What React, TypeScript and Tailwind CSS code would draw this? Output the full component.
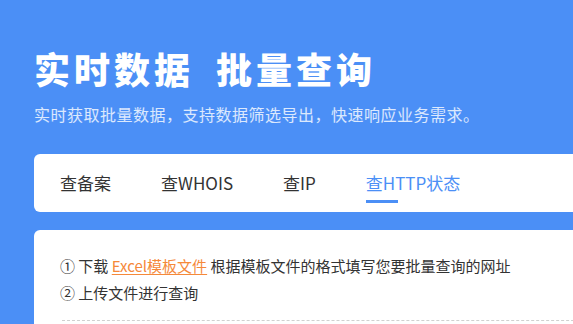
import React from "react";

const tabs = ["查备案", "查WHOIS", "查IP", "查HTTP状态"];

export default function App() {
  const active = 3;
  return (
    <div
      className="h-[324px] w-full overflow-hidden bg-[#4b8ff6] pl-[34px]"
      style={{ fontFamily: '"Noto Sans CJK SC", "Noto Sans", sans-serif' }}
    >
      <h1 className="mt-[50px] flex gap-[22px] text-[36px] font-black leading-[36px] tracking-[4px] text-white">
        <span>实时数据</span>
        <span>批量查询</span>
      </h1>
      <p className="mt-[20px] text-[16px] leading-[16px] tracking-[0.5px] text-white/80">
        实时获取批量数据，支持数据筛选导出，快速响应业务需求。
      </p>

      <div className="mt-[32px] flex h-[58px] w-[600px] items-center gap-[50px] rounded-l-md bg-white pl-[26px]">
        {tabs.map((t, i) => (
          <div key={t} className="relative">
            <span
              className={
                "text-[17px] leading-[20px] " +
                (i === active ? "text-[#4b8ff6]" : "text-[#333333]")
              }
            >
              {t}
            </span>
            {i === active && (
              <div className="absolute left-0 top-[29px] h-[3px] w-[32px] bg-[#4b8ff6]" />
            )}
          </div>
        ))}
      </div>

      <div className="mt-[18px] w-[600px] rounded-l-md bg-white pl-[26px] pt-[22px] text-[15px] leading-[27px] text-[#333333]">
        <p>
          ① 下载{" "}
          <a className="text-[#f5893a] underline underline-offset-2">Excel模板文件</a>{" "}
          根据模板文件的格式填写您要批量查询的网址
        </p>
        <p>② 上传文件进行查询</p>
        <div className="ml-[2px] mt-[14px] h-[40px] border-t border-dashed border-[#d0d0d0]" />
      </div>
    </div>
  );
}
